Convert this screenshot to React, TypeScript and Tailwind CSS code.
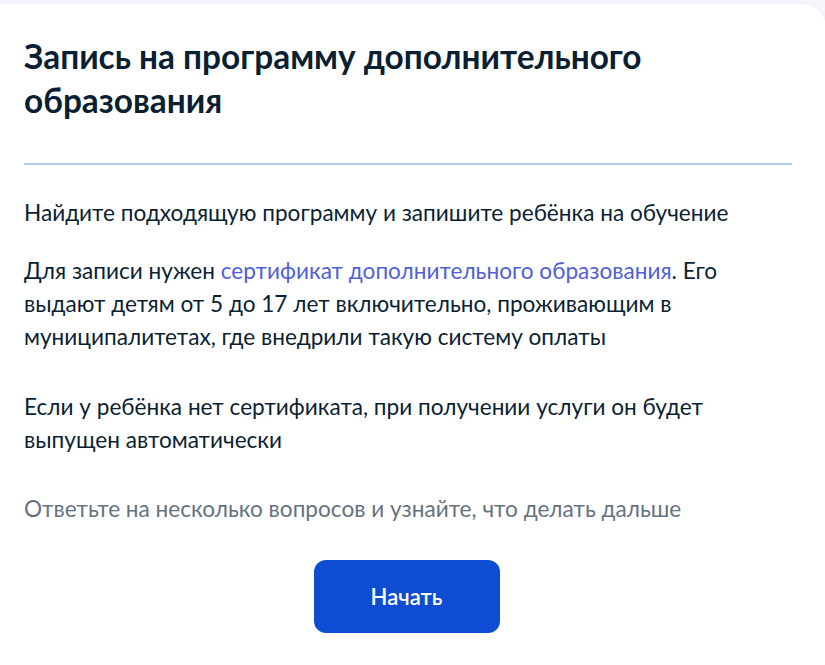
export default function App() {
  return (
    <main className="h-[665px] overflow-hidden bg-[#f5f7fc] font-['Lato','Noto_Sans',sans-serif]">
      <div className="-ml-6 mt-1 w-[850px] rounded-3xl bg-white pb-12 pl-12 pr-[34px] pt-[30px] shadow-[0_2px_8px_rgba(110,130,170,0.12)]">
        <h1 className="text-[33.4px] font-bold leading-[44px] text-[#0b1f33]">
          Запись на программу дополнительного образования
        </h1>
        <div className="mt-[41px] h-[2px] bg-[#b5c9f5]" />

        <div className="mt-[31px] max-w-[745px] text-[22.6px] leading-[33px] text-[#0b1f33]">
          <p>Найдите подходящую программу и запишите ребёнка на обучение</p>
          <p className="mt-[25px]">
            Для записи нужен{' '}
            <a href="#" className="text-[#5160d6]">
              сертификат дополнительного образования
            </a>
            . Его выдают детям от 5 до 17 лет включительно, проживающим в муниципалитетах, где внедрили такую
            систему оплаты
          </p>
          <p className="mt-[37px]">
            Если у ребёнка нет сертификата, при получении услуги он будет выпущен автоматически
          </p>
          <p className="mt-[36px] text-[#66727f]">Ответьте на несколько вопросов и узнайте, что делать дальше</p>
        </div>

        <div className="mt-[35px] flex justify-center">
          <button className="ml-[-3px] h-[73px] w-[186px] rounded-xl bg-[#0d4cd3] text-[22px] font-semibold text-white">
            Начать
          </button>
        </div>
      </div>
    </main>
  );
}
